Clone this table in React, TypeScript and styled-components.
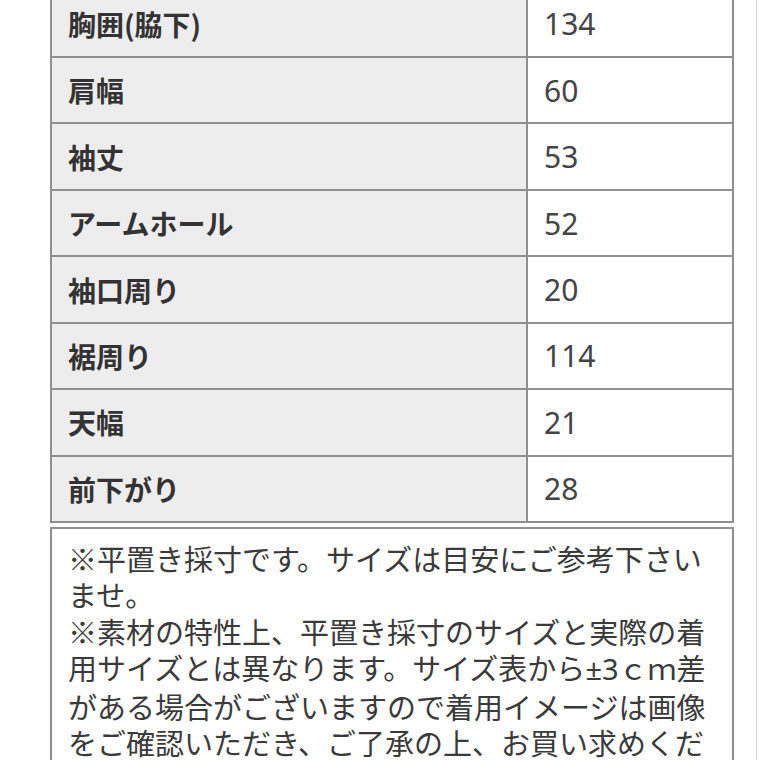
import styled, { createGlobalStyle } from "styled-components";

const GlobalStyle = createGlobalStyle`
  html, body {
    margin: 0;
    padding: 0;
    background: #ffffff;
  }
  body {
    font-family: "Noto Sans CJK JP", "Noto Sans", sans-serif;
    color: #333333;
  }
`

const Page = styled.div`
  display: flex;
  flex-direction: column;
  width: 757px;
  box-sizing: border-box;
  padding: 0 22px 0 50px;
  border-right: 1px solid #d4d4d4;
  min-height: 760px;
`

const SizeTable = styled.div`
  display: grid;
  grid-template-columns: 476px 1fr;
  margin-top: -10.4px;
  border: 2px solid #8f8f8f;
`

const Cell = styled.div<{ $head?: boolean; $last?: boolean }>`
  box-sizing: border-box;
  height: ${({ $last }) => ($last ? "64.43px" : "66.43px")};
  display: flex;
  align-items: center;
  padding-left: 16px;
  background: ${({ $head }) => ($head ? "#ededed" : "#ffffff")};
  border-bottom: ${({ $last }) => ($last ? "none" : "2px solid #8f8f8f")};
  border-right: ${({ $head }) => ($head ? "2px solid #8f8f8f" : "none")};
  font-family: ${({ $head }) =>
    $head ? `"Noto Sans CJK JP", sans-serif` : `"Noto Sans", "Noto Sans CJK JP", sans-serif`};
  font-size: ${({ $head }) => ($head ? "28px" : "30px")};
  font-weight: ${({ $head }) => ($head ? 700 : 400)};
  color: ${({ $head }) => ($head ? "#333333" : "#444444")};
  white-space: nowrap;
`

const Note = styled.div`
  margin-top: 4px;
  border: 2px solid #8f8f8f;
  padding: 11px 20px 12px 16px;
  font-family: "Noto Sans CJK JP", sans-serif;
  font-size: 29px;
  line-height: 36.5px;
  color: #3a3a3a;
  line-break: strict;
`

const NoteLine = styled.p`
  margin: 0;
`

const Latin = styled.span`
  font-family: "Noto Sans", sans-serif;
`

const rows: [string, string][] = [
  ["胸囲(脇下)", "134"],
  ["肩幅", "60"],
  ["袖丈", "53"],
  ["アームホール", "52"],
  ["袖口周り", "20"],
  ["裾周り", "114"],
  ["天幅", "21"],
  ["前下がり", "28"],
]

export default function App() {
  return (
    <>
      <GlobalStyle />
      <Page>
        <SizeTable>
          {rows.map(([label, value], i) => {
            const last = i === rows.length - 1
            return [
              <Cell key={label} $head $last={last}>{label}</Cell>,
              <Cell key={label + "-v"} $last={last}>{value}</Cell>,
            ]
          })}
        </SizeTable>
        <Note>
          <NoteLine>※平置き採寸です。サイズは目安にご参考下さいませ。</NoteLine>
          <NoteLine>
            ※素材の特性上、平置き採寸のサイズと実際の着用サイズとは異なります。サイズ表から<Latin>±3</Latin>ｃｍ差がある場合がございますので着用イメージは画像をご確認いただき、ご了承の上、お買い求めくださいませ。
          </NoteLine>
        </Note>
      </Page>
    </>
  )
}
